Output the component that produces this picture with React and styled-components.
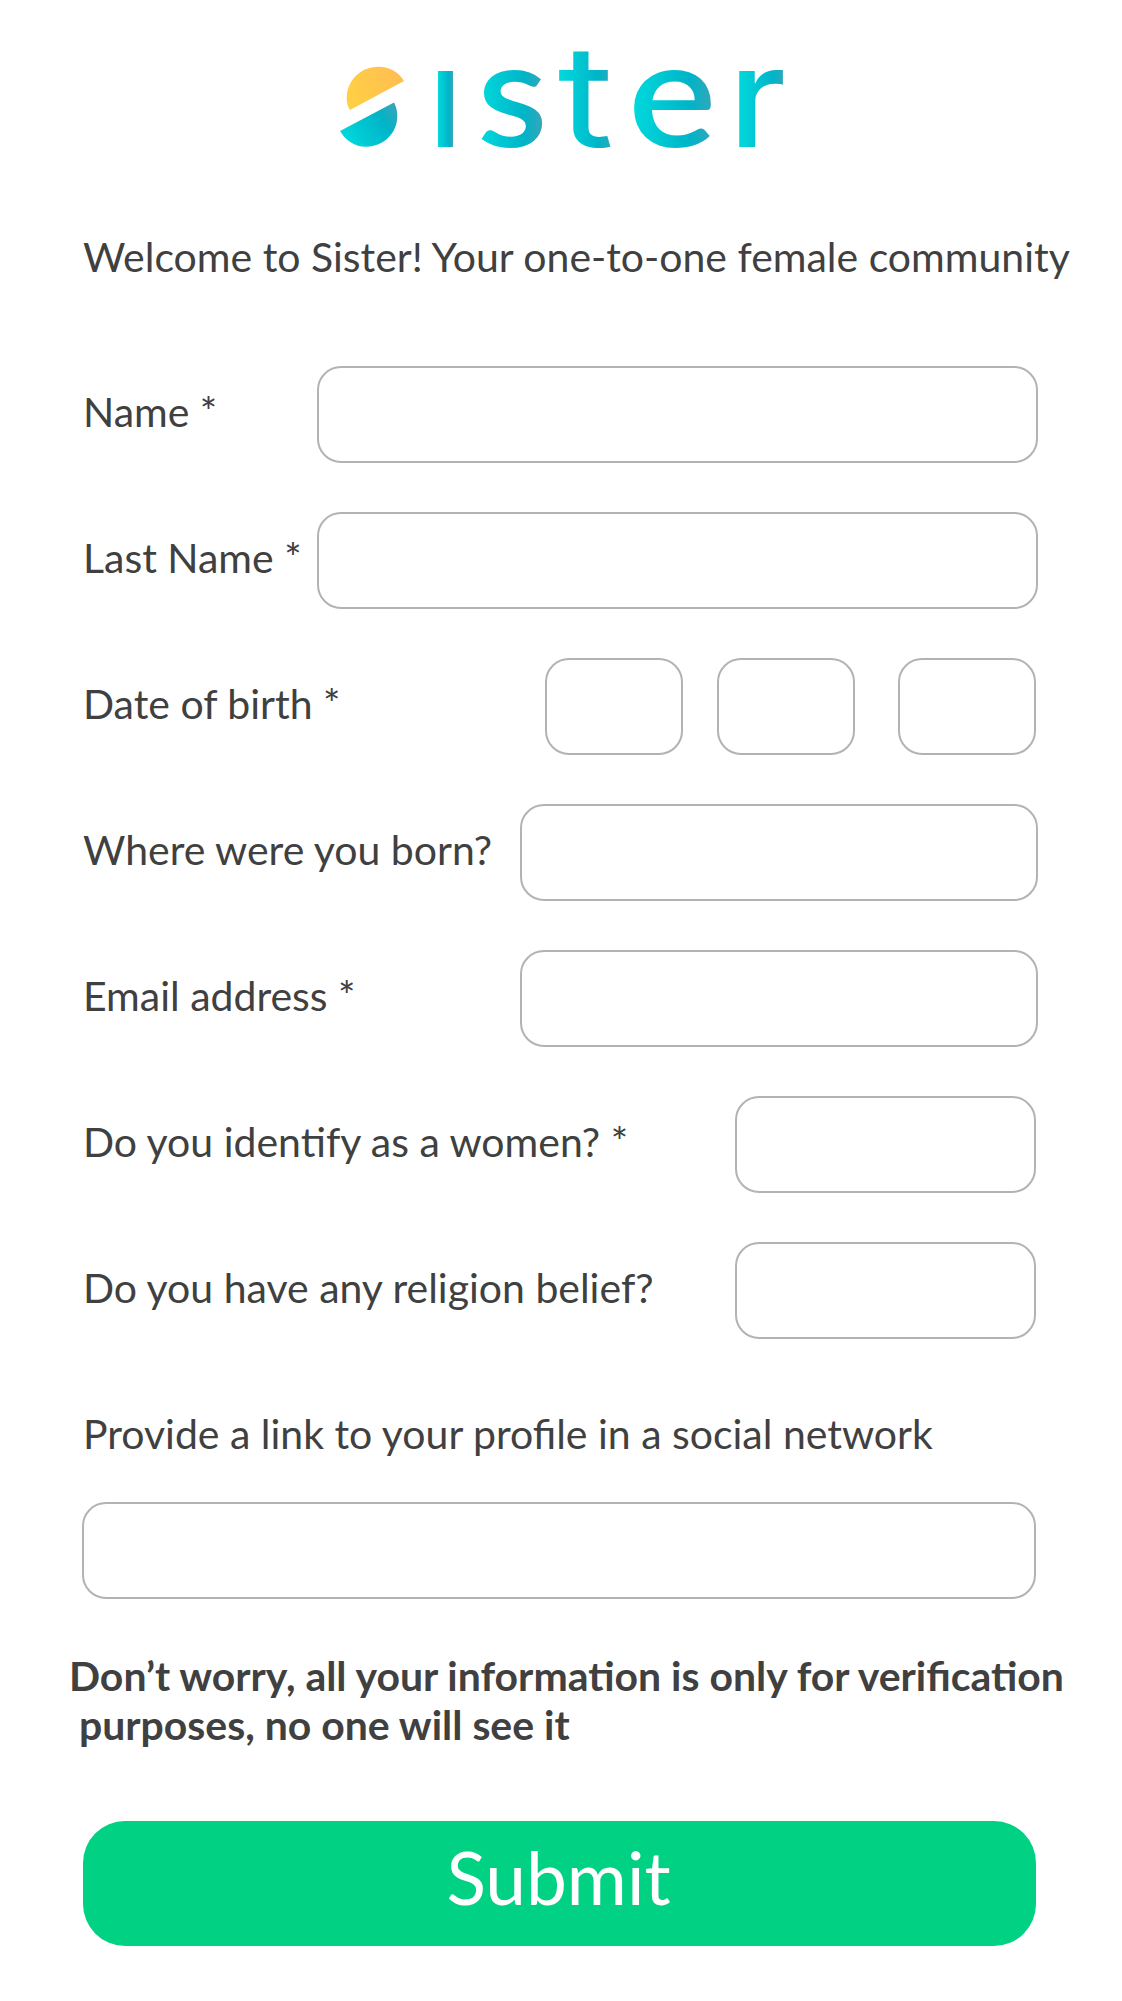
import React from "react";
import styled, { createGlobalStyle } from "styled-components";

const GlobalStyle = createGlobalStyle`
  *, *::before, *::after { box-sizing: border-box; }
  body {
    margin: 0;
    background: #fff;
    color: #404041;
    font-family: Lato, "Open Sans", sans-serif;
  }
`;

const Page = styled.main`
  width: 1122px;
  height: 2001px;
  padding: 0 83px 0 83px;
  overflow: hidden;
`;

const LogoMark = styled.svg`
  display: block;
  width: 462px;
  height: 190px;
  margin-left: 253px;
`;

const LogoLetter = styled.text`
  font-family: ${(p) => p.$font}, sans-serif;
  font-size: ${(p) => p.$size}px;
  font-weight: ${(p) => p.$weight};
`;

const Welcome = styled.p`
  margin: 42px 0 0;
  font-size: 40.97px;
  line-height: 49px;
  white-space: nowrap;
`;

const Form = styled.form`
  display: flex;
  flex-direction: column;
`;

const Rows = styled.div`
  display: flex;
  flex-direction: column;
  gap: 49.15px;
  margin-top: 84.5px;
`;

const Row = styled.div`
  display: flex;
  align-items: center;
  height: 97px;
  margin-right: ${(p) => (p.$wide ? 1 : 3)}px;
`;

const Label = styled.label`
  flex: 1;
  padding-bottom: 6px;
  font-size: 40.97px;
  line-height: 49px;
  white-space: nowrap;
`;

const Field = styled.input`
  flex: none;
  width: ${(p) => p.$width}px;
  height: 97px;
  padding: 0 24px;
  border: 2px solid #b3b3b3;
  border-radius: 24px;
  background: transparent;
  color: inherit;
  font: inherit;
  font-size: 41px;
  outline: none;
`;

const DateParts = styled.div`
  display: grid;
  grid-template-columns: 172px 181px 138px;
`;

const ProfileLabel = styled.label`
  margin-top: 69.6px;
  font-size: 40.97px;
  line-height: 49px;
  white-space: nowrap;
`;

const ProfileField = styled(Field)`
  margin: 44.3px 0 0 -1px;
`;

const Notice = styled.p`
  margin: 51.5px 0 0 -14px;
  font-size: 40.95px;
  font-weight: 700;
  line-height: 49px;
  white-space: pre;
`;

const SubmitButton = styled.button`
  width: 953px;
  height: 125px;
  margin-top: 72px;
  padding: 0 2px 12px 0;
  border: 0;
  border-radius: 42px;
  background: #00d182;
  color: #fff;
  font-family: inherit;
  font-size: 73px;
  line-height: 87px;
`;

const letters = [
  { char: "ı", font: "Inter", size: 139, weight: 500, x: 428, sx: 1, sy: 1, from: 10, to: 25 },
  { char: "s", font: "Lato", size: 149, weight: 600, x: 477, sx: 1.09, sy: 1, from: 3, to: 59 },
  { char: "t", font: "Inter", size: 139, weight: 400, x: 557.5, sx: 1.24, sy: 1.02, from: 2, to: 45 },
  { char: "e", font: "Lato", size: 149, weight: 600, x: 628, sx: 1.12, sy: 1, from: 5, to: 75 },
  { char: "r", font: "Inter", size: 139, weight: 500, x: 728.5, sx: 1.07, sy: 1, from: 10, to: 53 },
];

function TealStops() {
  return (
    <>
      <stop offset="0" stopColor="#00d9dc" />
      <stop offset="0.72" stopColor="#00b4c8" />
      <stop offset="1" stopColor="#34a6ba" />
    </>
  );
}

function Logo() {
  return (
    <LogoMark viewBox="336 0 462 190" role="img" aria-label="Sister">
      <defs>
        <linearGradient id="sun" x1="0" y1="0.6" x2="1" y2="0.3">
          <stop offset="0" stopColor="#ffcf45" />
          <stop offset="1" stopColor="#ffbd52" />
        </linearGradient>
        <linearGradient id="sea" x1="0" y1="0.7" x2="1" y2="0.2">
          <TealStops />
        </linearGradient>
        {letters.map((l) => (
          <linearGradient key={l.char} id={`teal-${l.char}`} gradientUnits="userSpaceOnUse" x1={l.from} x2={l.to} y1="0" y2="0">
            <TealStops />
          </linearGradient>
        ))}
      </defs>
      <path fill="url(#sun)" d="M350 110C347.5 106.500 346.700 102.500 346.700 98C346.700 81 360 66.700 378.500 66.700C389.500 66.700 398.500 72 404 81Z" />
      <path fill="url(#sea)" d="M340 131L394 102.500C396.300 107 397.300 111 397.300 116C397.300 133 383.500 146.700 366 146.700C354.500 146.700 346 141 340 131Z" />
      {letters.map((l) => (
        <LogoLetter
          key={l.char}
          $font={l.font}
          $size={l.size}
          $weight={l.weight}
          transform={`translate(${l.x} 146.700) scale(${l.sx} ${l.sy})`}
          fill={`url(#teal-${l.char})`}
        >
          {l.char}
        </LogoLetter>
      ))}
    </LogoMark>
  );
}

function TextRow({ id, label, width, wide, type = "text" }) {
  return (
    <Row $wide={wide}>
      <Label htmlFor={id}>{label}</Label>
      <Field id={id} type={type} $width={width} />
    </Row>
  );
}

export default function App() {
  return (
    <Page>
      <GlobalStyle />
      <Logo />
      <Welcome>Welcome to Sister! Your one-to-one female community</Welcome>
      <Form onSubmit={(e) => e.preventDefault()}>
        <Rows>
          <TextRow id="name" label="Name *" width={721} wide />
          <TextRow id="last-name" label="Last Name *" width={721} wide />
          <Row>
            <Label htmlFor="day">Date of birth *</Label>
            <DateParts>
              <Field id="day" aria-label="Day" $width={138} />
              <Field aria-label="Month" $width={138} />
              <Field aria-label="Year" $width={138} />
            </DateParts>
          </Row>
          <TextRow id="born" label="Where were you born?" width={518} wide />
          <TextRow id="email" type="email" label="Email address *" width={518} wide />
          <TextRow id="identify" label="Do you identify as a women? *" width={301} />
          <TextRow id="religion" label="Do you have any religion belief?" width={301} />
        </Rows>
        <ProfileLabel htmlFor="profile">Provide a link to your profile in a social network</ProfileLabel>
        <ProfileField id="profile" $width={954} />
        <Notice>{"Don’t worry, all your information is only for verification\n purposes, no one will see it"}</Notice>
        <SubmitButton type="submit">Submit</SubmitButton>
      </Form>
    </Page>
  );
}
